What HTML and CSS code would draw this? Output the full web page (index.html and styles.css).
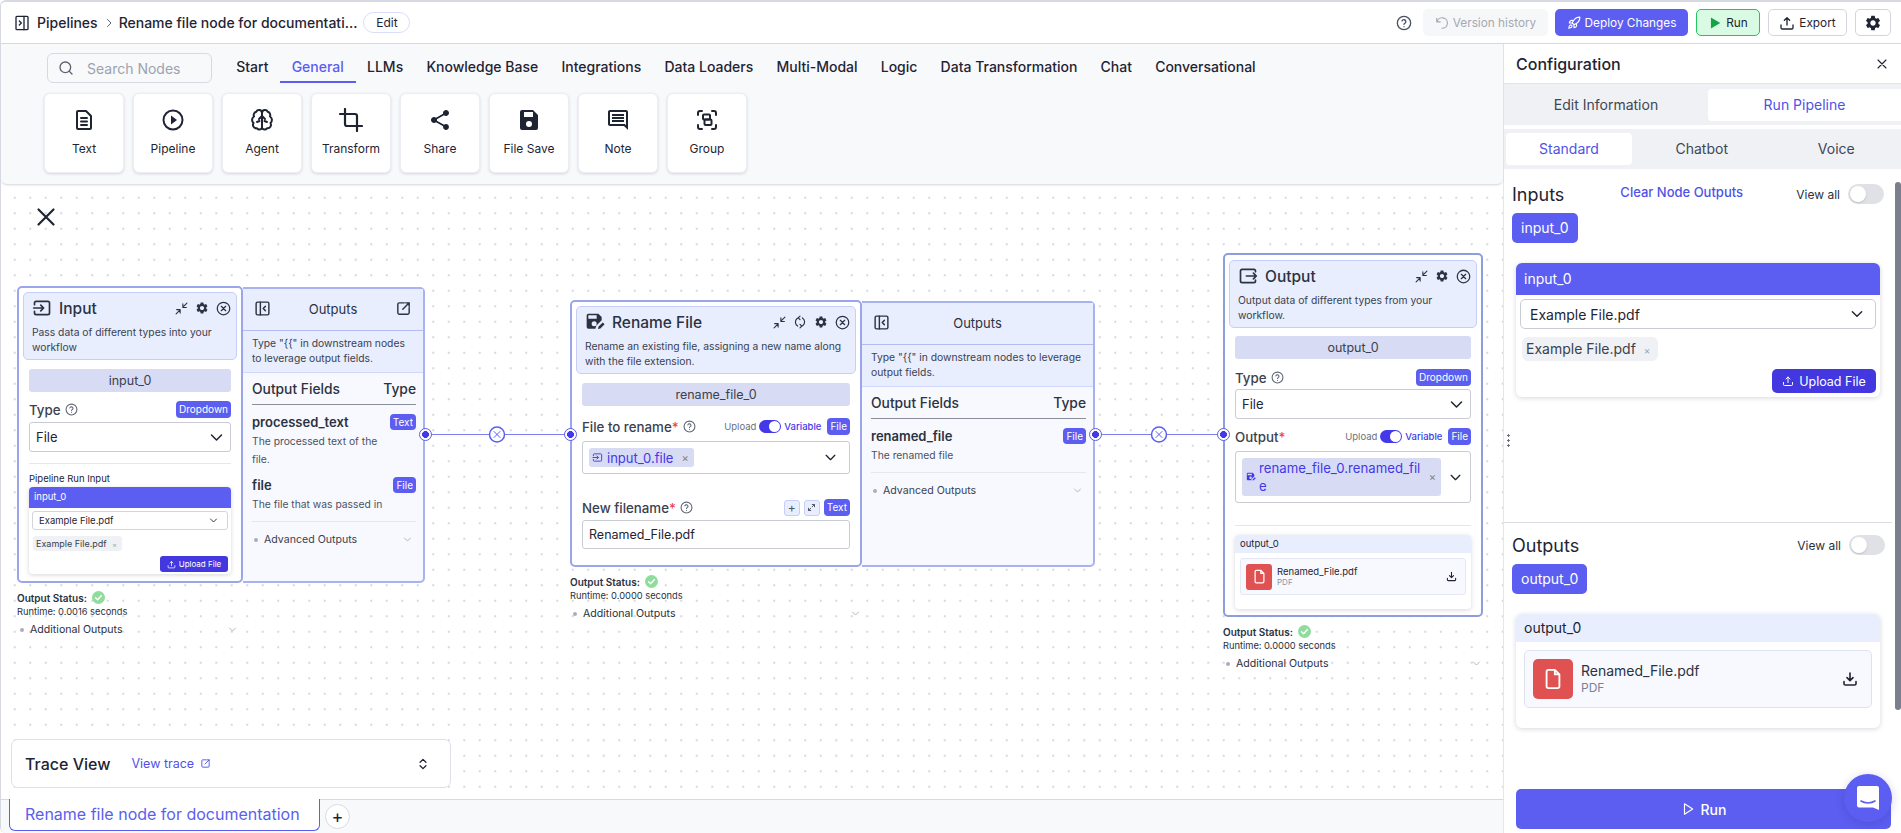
FILE: index.html
```html
<!DOCTYPE html>
<html lang="en">
<head>
<meta charset="utf-8">
<title>Rename file node for documentation</title>
<link rel="stylesheet" href="styles.css">
</head>
<body>
<svg class="sprite" aria-hidden="true">
  <symbol id="i-gear" viewBox="0 0 24 24"><path fill="currentColor" d="M19.14 12.94c.04-.3.06-.61.06-.94 0-.32-.02-.64-.07-.94l2.03-1.58a.49.49 0 00.12-.61l-1.92-3.32a.488.488 0 00-.59-.22l-2.39.96c-.5-.38-1.03-.7-1.62-.94l-.36-2.54a.484.484 0 00-.48-.41h-3.84c-.24 0-.43.17-.47.41l-.36 2.54c-.59.24-1.13.57-1.62.94l-2.39-.96c-.22-.08-.47 0-.59.22L2.74 8.87c-.12.21-.08.47.12.61l2.03 1.58c-.05.3-.09.63-.09.94s.02.64.07.94l-2.03 1.58a.49.49 0 00-.12.61l1.92 3.32c.12.22.37.29.59.22l2.39-.96c.5.38 1.03.7 1.62.94l.36 2.54c.05.24.24.41.48.41h3.84c.24 0 .44-.17.47-.41l.36-2.54c.59-.24 1.13-.56 1.62-.94l2.39.96c.22.08.47 0 .59-.22l1.92-3.32c.12-.22.07-.47-.12-.61l-2.01-1.58zM12 15.6c-1.98 0-3.6-1.62-3.6-3.6s1.62-3.6 3.6-3.6 3.6 1.62 3.6 3.6-1.62 3.6-3.6 3.6z"/></symbol>
  <symbol id="i-xcircle" viewBox="0 0 24 24"><g fill="none" stroke="currentColor" stroke-width="2" stroke-linecap="round"><circle cx="12" cy="12" r="10"/><path d="M8.5 8.5l7 7M15.5 8.5l-7 7"/></g></symbol>
  <symbol id="i-min" viewBox="0 0 24 24"><g fill="none" stroke="currentColor" stroke-width="2" stroke-linecap="round" stroke-linejoin="round"><path d="M2 22l7-7M3 14h6.500v6.500M22 2l-7 7M21 10h-6.500V3.500"/></g></symbol>
  <symbol id="i-help" viewBox="0 0 24 24"><g fill="none" stroke="currentColor" stroke-width="2" stroke-linecap="round"><circle cx="12" cy="12" r="10"/><path d="M9 9a3 3 0 015.8 1c0 2-2.8 2.4-2.8 4"/><path d="M12 17.5v.01"/></g></symbol>
  <symbol id="i-chev" viewBox="0 0 24 24"><path fill="none" stroke="currentColor" stroke-width="2.4" stroke-linecap="round" stroke-linejoin="round" d="M4 8l8 8 8-8"/></symbol>
  <symbol id="i-panel" viewBox="0 0 24 24"><g fill="none" stroke="currentColor" stroke-width="2" stroke-linecap="round" stroke-linejoin="round"><rect x="3" y="3" width="18" height="18" rx="2"/><path d="M9 3v18M16 9l-3 3 3 3"/></g></symbol>
  <symbol id="i-ext" viewBox="0 0 24 24"><g fill="none" stroke="currentColor" stroke-width="2" stroke-linecap="round" stroke-linejoin="round"><path d="M13 4H6a2 2 0 00-2 2v12a2 2 0 002 2h12a2 2 0 002-2v-7"/><path d="M11 13l9-9M15 4h5v5"/></g></symbol>
  <symbol id="i-check" viewBox="0 0 24 24"><circle cx="12" cy="12" r="12" fill="#8fdc9d"/><path fill="none" stroke="#fff" stroke-width="2.6" stroke-linecap="round" stroke-linejoin="round" d="M6.5 12.5l3.8 3.8 7.2-8"/></symbol>
  <symbol id="i-upload" viewBox="0 0 24 24"><g fill="none" stroke="currentColor" stroke-width="2" stroke-linecap="round" stroke-linejoin="round"><path d="M12 15V4M8 8l4-4 4 4M3 15v4a2 2 0 002 2h14a2 2 0 002-2v-4"/></g></symbol>
  <symbol id="i-download" viewBox="0 0 24 24"><g fill="none" stroke="currentColor" stroke-width="2.4" stroke-linecap="round" stroke-linejoin="round"><path d="M12 3v11M7.5 10l4.500 4.500L16.500 10M3 16v3a2 2 0 002 2h14a2 2 0 002-2v-3"/></g></symbol>
  <symbol id="i-file" viewBox="0 0 24 24"><path fill="none" stroke="currentColor" stroke-width="2" stroke-linejoin="round" d="M14 2H7a2 2 0 00-2 2v16a2 2 0 002 2h10a2 2 0 002-2V7zM14 2v5h5"/></symbol>
  <symbol id="i-input" viewBox="0 0 24 24"><g fill="none" stroke="currentColor" stroke-width="2" stroke-linecap="round" stroke-linejoin="round"><path d="M3 8V6a2 2 0 012-2h14a2 2 0 012 2v12a2 2 0 01-2 2H5a2 2 0 01-2-2v-2"/><path d="M2 12h12M10.500 8.500L14 12l-3.500 3.500"/></g></symbol>
  <symbol id="i-output" viewBox="0 0 24 24"><g fill="none" stroke="currentColor" stroke-width="2" stroke-linecap="round" stroke-linejoin="round"><path d="M21 7V6a2 2 0 00-2-2H5a2 2 0 00-2 2v12a2 2 0 002 2h14a2 2 0 002-2v-1"/><path d="M10 12h12M18.500 8.500L22 12l-3.500 3.500"/></g></symbol>
  <symbol id="i-rename" viewBox="0 0 24 24"><path fill="currentColor" d="M16 2H4a2 2 0 00-2 2v14a2 2 0 002 2h8.500l1-3.500 6.500-6.500V6l-4-4zm-5 15a3 3 0 110-6 3 3 0 010 6zm3-9H4V4h10v4zM15.500 20.500l.8-3 5-5 2.200 2.200-5 5z"/></symbol>
  <symbol id="i-sync" viewBox="0 0 24 24"><g fill="none" stroke="currentColor" stroke-width="2" stroke-linecap="round" stroke-linejoin="round"><path d="M8 19a8 8 0 01-1-13l2-1"/><path d="M16 5a8 8 0 011 13l-2 1"/><path d="M12 2L9 5l3 3M12 22l3-3-3-3"/></g></symbol>
</svg>

<div class="app">
  <header class="topbar">
    <svg class="ic-16 ic-dark" viewBox="0 0 24 24"><g fill="none" stroke="currentColor" stroke-width="2" stroke-linecap="round" stroke-linejoin="round"><rect x="3" y="2" width="18" height="20" rx="1.500"/><path d="M15 2v20M8 9l3 3-3 3"/></g></svg>
    <a class="crumb">Pipelines</a>
    <svg class="ic-12 ic-grey crumb-sep" viewBox="0 0 24 24"><path fill="none" stroke="currentColor" stroke-width="2" stroke-linecap="round" stroke-linejoin="round" d="M9 5l7 7-7 7"/></svg>
    <span class="crumb crumb-title">Rename file node for documentati...</span>
    <button class="edit-btn">Edit</button>
    <span class="spacer"></span>
    <svg class="ic-16 ic-slate" viewBox="0 0 24 24"><use href="#i-help"/></svg>
    <button class="top-btn version">
      <svg class="ic-14" viewBox="0 0 24 24"><path fill="none" stroke="currentColor" stroke-width="2" stroke-linecap="round" stroke-linejoin="round" d="M3 4v6h6M3.500 10A9 9 0 1112 21"/></svg>Version history</button>
    <button class="top-btn deploy">
      <svg class="ic-14" viewBox="0 0 24 24"><g fill="none" stroke="currentColor" stroke-width="2" stroke-linecap="round" stroke-linejoin="round"><path d="M5 16c-1.500 1.300-2 5-2 5s3.700-.5 5-2c.7-.8.7-2.100-.1-2.900-.8-.8-2.100-.8-2.900-.1z"/><path d="M12 15l-3-3a22 22 0 012-3.900A13 13 0 0122 2c0 2.700-.8 7.500-6 11a22 22 0 01-4 2z"/><path d="M9 12H4s.5-3 2-4c1.600-1.100 5 0 5 0M12 15v5s3-.5 4-2c1.100-1.600 0-5 0-5"/></g></svg>Deploy Changes</button>
    <button class="top-btn run-top">
      <svg class="ic-14" viewBox="0 0 24 24"><path fill="#15a34a" d="M5 2.500v19L21 12z"/></svg>Run</button>
    <button class="top-btn export">
      <svg class="ic-16" viewBox="0 0 24 24"><use href="#i-upload"/></svg>Export</button>
    <button class="top-btn gear"><svg class="ic-18" viewBox="0 0 24 24"><use href="#i-gear"/></svg></button>
  </header>

  <div class="workspace">
    <main class="editor">
      <section class="palette">
        <div class="palette-tabs">
          <label class="search">
            <svg class="ic-16" viewBox="0 0 24 24"><g fill="none" stroke="currentColor" stroke-width="2" stroke-linecap="round"><circle cx="11" cy="11" r="8"/><path d="M21 21l-4.300-4.300"/></g></svg>
            <span>Search Nodes</span>
          </label>
          <nav class="tabs">
            <a class="tab">Start</a><a class="tab tab-on">General</a><a class="tab">LLMs</a><a class="tab">Knowledge Base</a><a class="tab">Integrations</a><a class="tab">Data Loaders</a><a class="tab">Multi-Modal</a><a class="tab">Logic</a><a class="tab">Data Transformation</a><a class="tab">Chat</a><a class="tab">Conversational</a>
          </nav>
        </div>
        <div class="cards">
          <div class="card">
            <svg class="ic-24" viewBox="0 0 24 24"><g fill="none" stroke="currentColor" stroke-width="2" stroke-linejoin="round" stroke-linecap="round"><path d="M14 3H6a1 1 0 00-1 1v16a1 1 0 001 1h12a1 1 0 001-1V8z"/><path d="M9 10h6M9 13.500h6M9 17h6"/></g></svg>
            <span>Text</span></div>
          <div class="card">
            <svg class="ic-24" viewBox="0 0 24 24"><circle cx="12" cy="12" r="9.500" fill="none" stroke="currentColor" stroke-width="2"/><path fill="currentColor" d="M10 7.500v9l6-4.500z"/></svg>
            <span>Pipeline</span></div>
          <div class="card">
            <svg class="ic-24" viewBox="0 0 24 24"><g fill="none" stroke="currentColor" stroke-width="2" stroke-linecap="round" stroke-linejoin="round"><path d="M12 5a3 3 0 00-5.700-1.300A3.500 3.500 0 004 8.500a4 4 0 00-.5 6.500A3.500 3.500 0 007 20.300 3 3 0 0012 20z"/><path d="M12 5a3 3 0 015.700-1.300A3.500 3.500 0 0120 8.500a4 4 0 01.5 6.500 3.500 3.500 0 01-3.500 5.300A3 3 0 0112 20z"/><path d="M12 20V8M9 11l3-3 3 3M7 14l2.500-1M17 14l-2.500-1"/></g></svg>
            <span>Agent</span></div>
          <div class="card">
            <svg class="ic-24" viewBox="0 0 24 24"><g fill="none" stroke="currentColor" stroke-width="2.200" stroke-linecap="round" stroke-linejoin="round"><path d="M6 1v15a2 2 0 002 2h15"/><path d="M18 23V8a2 2 0 00-2-2H1"/></g></svg>
            <span>Transform</span></div>
          <div class="card">
            <svg class="ic-24" viewBox="0 0 24 24"><path fill="currentColor" d="M18 16.080c-.76 0-1.440.3-1.960.77L8.910 12.700c.05-.23.09-.46.09-.7s-.04-.47-.09-.7l7.050-4.110c.54.5 1.250.81 2.040.81 1.660 0 3-1.340 3-3s-1.340-3-3-3-3 1.340-3 3c0 .24.04.47.09.7L8.040 9.810C7.500 9.310 6.790 9 6 9c-1.660 0-3 1.340-3 3s1.340 3 3 3c.79 0 1.500-.31 2.040-.81l7.120 4.160c-.05.21-.08.43-.08.65 0 1.610 1.310 2.920 2.920 2.920 1.610 0 2.920-1.310 2.920-2.920s-1.310-2.920-2.920-2.920z"/></svg>
            <span>Share</span></div>
          <div class="card">
            <svg class="ic-24" viewBox="0 0 24 24"><path fill="currentColor" fill-rule="evenodd" d="M5 2h11l5 5v13a2 2 0 01-2 2H5a2 2 0 01-2-2V4a2 2 0 012-2zm2 2v5h9V4zm5 9a3 3 0 100 6 3 3 0 000-6z"/></svg>
            <span>File Save</span></div>
          <div class="card">
            <svg class="ic-24" viewBox="0 0 24 24"><path fill="currentColor" d="M21.990 4c0-1.100-.89-2-1.990-2H4c-1.100 0-2 .9-2 2v12c0 1.100.9 2 2 2h14l4 4-.01-18zM20 4v13.170L18.830 16H4V4h16zM6 12h12v2H6zm0-3h12v2H6zm0-3h12v2H6z"/></svg>
            <span>Note</span></div>
          <div class="card">
            <svg class="ic-24" viewBox="0 0 24 24"><g fill="none" stroke="currentColor" stroke-width="2" stroke-linecap="round" stroke-linejoin="round"><path d="M3 7V5a2 2 0 012-2h2M17 3h2a2 2 0 012 2v2M21 17v2a2 2 0 01-2 2h-2M7 21H5a2 2 0 01-2-2v-2"/><rect x="8" y="6.500" width="7" height="5" rx="1"/><rect x="9.500" y="11.500" width="7" height="5.500" rx="1"/></g></svg>
            <span>Group</span></div>
        </div>
      </section>

      <section class="canvas">
        <svg class="close-x" viewBox="0 0 24 24"><path fill="none" stroke="currentColor" stroke-width="2.600" stroke-linecap="round" d="M3 3l18 18M21 3L3 21"/></svg>

        <svg class="edges" width="1503" height="615">
          <path d="M424 250.500H569M1094 250.500H1222"/>
          <g class="edge-x"><circle cx="496" cy="250.500" r="7.500"/><path d="M493 247.500l6 6M499 247.500l-6 6"/></g>
          <g class="edge-x"><circle cx="1158" cy="250.500" r="7.500"/><path d="M1155 247.500l6 6M1161 247.500l-6 6"/></g>
        </svg>

        <!-- Input node -->
        <article class="node node-input">
          <div class="node-row">
            <div class="node-main main-input">
              <div class="node-head">
                <div class="head-line">
                  <svg class="ic-20" viewBox="0 0 24 24"><use href="#i-input"/></svg>
                  <h3>Input</h3><span class="spacer"></span>
                  <svg class="ic-13" viewBox="0 0 24 24"><use href="#i-min"/></svg>
                  <svg class="ic-14" viewBox="0 0 24 24"><use href="#i-gear"/></svg>
                  <svg class="ic-15" viewBox="0 0 24 24"><use href="#i-xcircle"/></svg>
                </div>
                <p>Pass data of different types into your workflow</p>
              </div>
              <div class="node-body">
                <div class="name-bar">input_0</div>
                <div class="field-row">
                  <span class="f-label">Type</span><svg class="ic-13 ic-grey" viewBox="0 0 24 24"><use href="#i-help"/></svg>
                  <span class="spacer"></span><span class="badge">Dropdown</span>
                </div>
                <div class="select">File<svg class="ic-15" viewBox="0 0 24 24"><use href="#i-chev"/></svg></div>
                <hr class="rule rule-input">
                <div class="run-label">Pipeline Run Input</div>
                <div class="mini-card">
                  <div class="mini-head purple">input_0</div>
                  <div class="mini-select">Example File.pdf<svg class="ic-9" viewBox="0 0 24 24"><use href="#i-chev"/></svg></div>
                  <div class="mini-chip">Example File.pdf <i>×</i></div>
                  <div class="mini-foot"><button class="mini-upload"><svg class="ic-9" viewBox="0 0 24 24"><use href="#i-upload"/></svg>Upload File</button></div>
                </div>
              </div>
            </div>
            <aside class="outs outs-input">
              <div class="outs-head">
                <svg class="ic-17" viewBox="0 0 24 24"><use href="#i-panel"/></svg>
                <span>Outputs</span>
                <svg class="ic-17" viewBox="0 0 24 24"><use href="#i-ext"/></svg>
              </div>
              <p class="outs-desc">Type "{{" in downstream nodes to leverage output fields.</p>
              <div class="outs-body">
                <div class="outs-th"><span>Output Fields</span><span>Type</span></div>
                <div class="out-field">
                  <div class="out-name"><b>processed_text</b><span class="badge badge-sm">Text</span></div>
                  <p>The processed text of the file.</p>
                </div>
                <div class="out-field">
                  <div class="out-name"><b>file</b><span class="badge badge-sm">File</span></div>
                  <p>The file that was passed in</p>
                </div>
                <div class="adv">
                  <i class="dot"></i>Advanced Outputs<span class="spacer"></span><svg class="ic-9 ic-pale" viewBox="0 0 24 24"><use href="#i-chev"/></svg>
                </div>
              </div>
            </aside>
            <span class="handle h-right"></span>
          </div>
          <footer class="status">
            <div class="status-line"><b>Output Status:</b><svg class="ic-13" viewBox="0 0 24 24"><use href="#i-check"/></svg></div>
            <div class="runtime">Runtime: 0.0016 seconds</div>
            <div class="addl"><i class="dot"></i>Additional Outputs<span class="spacer"></span><svg class="ic-9 ic-pale" viewBox="0 0 24 24"><use href="#i-chev"/></svg></div>
          </footer>
        </article>

        <!-- Rename node -->
        <article class="node node-rename">
          <div class="node-row">
            <div class="node-main main-rename">
              <div class="node-head">
                <div class="head-line">
                  <svg class="ic-20" viewBox="0 0 24 24"><use href="#i-rename"/></svg>
                  <h3>Rename File</h3><span class="spacer"></span>
                  <svg class="ic-13" viewBox="0 0 24 24"><use href="#i-min"/></svg>
                  <svg class="ic-14" viewBox="0 0 24 24"><use href="#i-sync"/></svg>
                  <svg class="ic-14" viewBox="0 0 24 24"><use href="#i-gear"/></svg>
                  <svg class="ic-15" viewBox="0 0 24 24"><use href="#i-xcircle"/></svg>
                </div>
                <p>Rename an existing file, assigning a new name along with the file extension.</p>
              </div>
              <div class="node-body">
                <div class="name-bar">rename_file_0</div>
                <div class="field-row row-file">
                  <span class="f-label">File to rename<em>*</em></span><svg class="ic-13 ic-grey" viewBox="0 0 24 24"><use href="#i-help"/></svg>
                  <span class="spacer"></span>
                  <span class="mode">Upload</span><span class="mini-toggle"></span><span class="mode mode-on">Variable</span>
                  <span class="badge badge-file">File</span>
                </div>
                <div class="select select-var">
                  <span class="var-chip"><svg class="ic-11" viewBox="0 0 24 24"><use href="#i-input"/></svg>input_0.file<i>×</i></span>
                  <svg class="ic-13" viewBox="0 0 24 24"><use href="#i-chev"/></svg>
                </div>
                <div class="field-row row-new">
                  <span class="f-label">New filename<em>*</em></span><svg class="ic-13 ic-grey" viewBox="0 0 24 24"><use href="#i-help"/></svg>
                  <span class="spacer"></span>
                  <span class="sq-btn">+</span>
                  <span class="sq-btn"><svg class="ic-9" viewBox="0 0 24 24"><path fill="none" stroke="currentColor" stroke-width="2.500" stroke-linecap="round" stroke-linejoin="round" d="M4 20l6-6M4 14v6h6M20 4l-6 6M14 4h6v6"/></svg></span>
                  <span class="badge">Text</span>
                </div>
                <div class="select text-in">Renamed_File.pdf</div>
              </div>
            </div>
            <aside class="outs outs-rename">
              <div class="outs-head">
                <svg class="ic-17" viewBox="0 0 24 24"><use href="#i-panel"/></svg>
                <span>Outputs</span>
                <span class="ic-17"></span>
              </div>
              <p class="outs-desc">Type "{{" in downstream nodes to leverage output fields.</p>
              <div class="outs-body">
                <div class="outs-th"><span>Output Fields</span><span>Type</span></div>
                <div class="out-field">
                  <div class="out-name"><b>renamed_file</b><span class="badge badge-sm">File</span></div>
                  <p>The renamed file</p>
                </div>
                <div class="adv">
                  <i class="dot"></i>Advanced Outputs<span class="spacer"></span><svg class="ic-9 ic-pale" viewBox="0 0 24 24"><use href="#i-chev"/></svg>
                </div>
              </div>
            </aside>
            <span class="handle h-left"></span>
            <span class="handle h-right"></span>
          </div>
          <footer class="status">
            <div class="status-line"><b>Output Status:</b><svg class="ic-13" viewBox="0 0 24 24"><use href="#i-check"/></svg></div>
            <div class="runtime">Runtime: 0.0000 seconds</div>
            <div class="addl"><i class="dot"></i>Additional Outputs<span class="spacer"></span><svg class="ic-9 ic-pale" viewBox="0 0 24 24"><use href="#i-chev"/></svg></div>
          </footer>
        </article>

        <!-- Output node -->
        <article class="node node-output">
          <div class="node-row">
            <div class="node-main main-output">
              <div class="node-head">
                <div class="head-line">
                  <svg class="ic-20" viewBox="0 0 24 24"><use href="#i-output"/></svg>
                  <h3>Output</h3><span class="spacer"></span>
                  <svg class="ic-13" viewBox="0 0 24 24"><use href="#i-min"/></svg>
                  <svg class="ic-14" viewBox="0 0 24 24"><use href="#i-gear"/></svg>
                  <svg class="ic-15" viewBox="0 0 24 24"><use href="#i-xcircle"/></svg>
                </div>
                <p>Output data of different types from your workflow.</p>
              </div>
              <div class="node-body">
                <div class="name-bar">output_0</div>
                <div class="field-row row-type">
                  <span class="f-label">Type</span><svg class="ic-13 ic-grey" viewBox="0 0 24 24"><use href="#i-help"/></svg>
                  <span class="spacer"></span><span class="badge">Dropdown</span>
                </div>
                <div class="select select-type">File<svg class="ic-15" viewBox="0 0 24 24"><use href="#i-chev"/></svg></div>
                <div class="field-row row-out">
                  <span class="f-label">Output<em>*</em></span>
                  <span class="spacer"></span>
                  <span class="mode">Upload</span><span class="mini-toggle"></span><span class="mode mode-on">Variable</span>
                  <span class="badge badge-file">File</span>
                </div>
                <div class="select select-tall">
                  <span class="var-chip var-wide"><svg class="ic-10" viewBox="0 0 24 24"><use href="#i-rename"/></svg><span class="var-text">rename_file_0.renamed_fil e</span><i>×</i></span>
                  <svg class="ic-13" viewBox="0 0 24 24"><use href="#i-chev"/></svg>
                </div>
                <hr class="rule rule-output">
                <div class="mini-card mini-result">
                  <div class="mini-head pale">output_0</div>
                  <div class="file-row">
                    <span class="file-tile"><svg class="ic-15" viewBox="0 0 24 24"><use href="#i-file"/></svg></span>
                    <div class="file-meta"><span>Renamed_File.pdf</span><small>PDF</small></div>
                    <span class="spacer"></span>
                    <svg class="ic-11" viewBox="0 0 24 24"><use href="#i-download"/></svg>
                  </div>
                </div>
              </div>
            </div>
            <span class="handle h-left"></span>
          </div>
          <footer class="status">
            <div class="status-line"><b>Output Status:</b><svg class="ic-13" viewBox="0 0 24 24"><use href="#i-check"/></svg></div>
            <div class="runtime">Runtime: 0.0000 seconds</div>
            <div class="addl"><i class="dot"></i>Additional Outputs<span class="spacer"></span><svg class="ic-9 ic-pale" viewBox="0 0 24 24"><use href="#i-chev"/></svg></div>
          </footer>
        </article>

        <div class="trace">
          <strong>Trace View</strong>
          <a>View trace<svg class="ic-11" viewBox="0 0 24 24"><use href="#i-ext"/></svg></a>
          <span class="spacer"></span>
          <svg class="ic-14" viewBox="0 0 24 24"><path fill="none" stroke="currentColor" stroke-width="2.200" stroke-linecap="round" stroke-linejoin="round" d="M7 9l5-5 5 5M7 15l5 5 5-5"/></svg>
        </div>
      </section>

      <footer class="tabbar">
        <div class="doc-tab">Rename file node for documentation</div>
        <button class="add-tab">+</button>
      </footer>
    </main>

    <aside class="config">
      <div class="config-head"><h2>Configuration</h2>
        <svg class="ic-12" viewBox="0 0 24 24"><path fill="none" stroke="currentColor" stroke-width="2.200" stroke-linecap="round" d="M4 4l16 16M20 4L4 20"/></svg>
      </div>
      <div class="seg seg-2"><span>Edit Information</span><span class="seg-on">Run Pipeline</span></div>
      <div class="seg seg-3"><span class="seg-on">Standard</span><span>Chatbot</span><span>Voice</span></div>

      <div class="config-scroll">
        <section class="io io-in">
          <div class="io-head"><h2>Inputs</h2><a class="clear">Clear Node Outputs</a><span class="spacer"></span><span class="viewall">View all</span><span class="toggle"></span></div>
          <span class="chip">input_0</span>
          <div class="io-card">
            <div class="io-card-head purple">input_0</div>
            <div class="io-select">Example File.pdf<svg class="ic-14" viewBox="0 0 24 24"><use href="#i-chev"/></svg></div>
            <div class="io-chip">Example File.pdf <i>×</i></div>
            <div class="io-foot"><button class="io-upload"><svg class="ic-12" viewBox="0 0 24 24"><use href="#i-upload"/></svg>Upload File</button></div>
          </div>
        </section>
        <section class="io io-out">
          <div class="io-head"><h2>Outputs</h2><span class="spacer"></span><span class="viewall">View all</span><span class="toggle"></span></div>
          <span class="chip">output_0</span>
          <div class="io-card io-card-out">
            <div class="io-card-head pale">output_0</div>
            <div class="io-file">
              <span class="io-tile"><svg class="ic-22" viewBox="0 0 24 24"><use href="#i-file"/></svg></span>
              <div class="io-meta"><span>Renamed_File.pdf</span><small>PDF</small></div>
              <span class="spacer"></span>
              <svg class="ic-16" viewBox="0 0 24 24"><use href="#i-download"/></svg>
            </div>
          </div>
        </section>
        <button class="run-main">
          <svg class="ic-14" viewBox="0 0 24 24"><path fill="none" stroke="currentColor" stroke-width="2" stroke-linejoin="round" d="M6 3v18l14-9z"/></svg>Run</button>
      </div>
      <span class="scroll-thumb"></span>
      <span class="grip"></span>
    </aside>
  </div>
</div>

<div class="chat-bubble">
  <svg width="24" height="26" viewBox="0 0 24 26"><path fill="#fff" d="M3 1h18a2 2 0 012 2v22l-6-2.500H3a2 2 0 01-2-2V3a2 2 0 012-2z"/><path fill="none" stroke="#5b5ef0" stroke-width="1.600" stroke-linecap="round" d="M5 16c4 2.600 10 2.600 14 0"/></svg>
</div>
</body>
</html>
```

FILE: styles.css
```css
* { box-sizing: border-box; }
html, body { margin: 0; height: 100%; overflow: hidden; }
body { font-family: Inter, "Liberation Sans", sans-serif; color: #1f2433; background: #fff; font-size: 14px; }
h2, h3, p { margin: 0; font-weight: 400; }
button { font: inherit; color: inherit; background: none; border: 0; padding: 0; }
i { font-style: normal; }
svg { display: block; flex: none; }
.sprite { position: absolute; width: 0; height: 0; }
.spacer { flex: 1; }

.ic-9 { width: 9px; height: 9px; } .ic-10 { width: 10px; height: 10px; }
.ic-11 { width: 11px; height: 11px; } .ic-12 { width: 12px; height: 12px; }
.ic-13 { width: 13px; height: 13px; } .ic-14 { width: 14px; height: 14px; }
.ic-15 { width: 15px; height: 15px; } .ic-16 { width: 16px; height: 16px; }
.ic-17 { width: 17px; height: 17px; } .ic-18 { width: 18px; height: 18px; }
.ic-20 { width: 20px; height: 20px; } .ic-22 { width: 22px; height: 22px; }
.ic-24 { width: 24px; height: 24px; }
.ic-dark { color: #1f2433; } .ic-grey { color: #5f6675; } .ic-slate { color: #4b5263; } .ic-pale { color: #a9aebb; }

.app { height: 833px; display: flex; flex-direction: column; border-top: 2px solid #d6d8e2; border-left: 1px solid #d6d8e2; border-radius: 6px 0 0 6px; overflow: hidden; }

/* top bar */
.topbar { height: 42px; flex: none; display: flex; align-items: center; padding: 0 10px 0 13px; border-bottom: 1px solid #d6d8e2; background: #fff; }
.crumb { font-size: 14px; line-height: 20px; margin-left: 7px; white-space: nowrap; font-weight: 450; }
.crumb-sep { margin-left: 5px; }
.crumb-title { margin-left: 4px; }
.edit-btn { margin-left: 6px; width: 47px; height: 21px; border: 1px solid #d9dcfb; border-radius: 11px; font-size: 12px; }
.top-btn { height: 27px; display: flex; align-items: center; justify-content: center; gap: 4px; border-radius: 5px; font-size: 11.800px; margin-left: 8px; white-space: nowrap; }
.version { width: 125px; margin-left: 11px; background: #f6f7f8; color: #a4a9b3; }
.deploy { width: 133px; margin-left: 7px; background: #5b5ef0; color: #fff; }
.run-top { width: 64px; background: #d9fbe3; border: 1px solid #22c55e; color: #1f2433; }
.export { width: 79px; border: 1px solid #d3d5dc; }
.gear { width: 36px; border: 1px solid #d3d5dc; }

.workspace { flex: 1; display: flex; min-height: 0; }
.editor { width: 1502px; flex: none; display: flex; flex-direction: column; position: relative; }

/* palette */
.palette { height: 141px; flex: none; background: #f8f9fb; border-bottom: 1px solid #dfe1e7; border-radius: 0 0 6px 6px; box-shadow: 0 1px 2px rgba(30, 35, 60, .08); padding: 9px 0 0 43px; position: relative; z-index: 1; }
.palette-tabs { display: flex; height: 30px; }
.search { width: 165px; height: 30px; margin-left: 3px; display: flex; align-items: center; gap: 13px; padding-left: 10px; border: 1px solid #d7dae3; border-radius: 6px; color: #5b6270; }
.search span { color: #9ca3af; font-size: 14px; }
.tabs { display: flex; margin-left: 13px; }
.tab { height: 30px; padding: 0 12px; font-size: 14px; line-height: 27px; white-space: nowrap; font-weight: 450; margin-left: -0.800px; }
.tab-on { color: #5b5ef0; border-bottom: 2px solid #5b5ef0; }
.cards { display: flex; gap: 9px; margin-top: 10px; }
.card { width: 80px; height: 80px; background: #fff; border: 1px solid #eceef3; border-radius: 6px; box-shadow: 0 1px 3px rgba(30, 35, 60, .16); display: flex; flex-direction: column; align-items: center; padding-top: 14px; }
.card span { font-size: 12px; line-height: 16px; margin-top: 9px; }

/* canvas */
.canvas { flex: 1; margin-top: -1px; position: relative; min-height: 0; background-color: #fff; background-image: radial-gradient(circle, #d3d6e4 0.7px, transparent 1px); background-size: 15.500px 15.500px; background-position: 6px 6px; }
.close-x { position: absolute; left: 35px; top: 23px; width: 20px; height: 20px; color: #1f2433; }
.edges { position: absolute; left: 0; top: 0; pointer-events: none; }
.edges > path { fill: none; stroke: #7b80f0; stroke-width: 1; }
.edge-x circle { fill: #fff; stroke: #5b5ef0; stroke-width: 1.500; }
.edge-x path { stroke: #5b5ef0; stroke-linecap: round; }

.node { position: absolute; }
.node-input { left: 16px; top: 102px; width: 408px; }
.node-rename { left: 569px; top: 116px; width: 525px; }
.node-output { left: 1222px; top: 69px; width: 260px; }
.node-row { display: flex; align-items: stretch; position: relative; }
.node-main { background: #fff; border: 2px solid #9aa5ec; border-radius: 5px; padding: 4px; flex: none; position: relative; z-index: 1; }
.main-input { width: 226px; height: 297px; }
.main-rename { width: 292px; height: 267px; }
.main-output { width: 260px; height: 364px; padding-top: 5px; border-color: #8d9ede; }
.node-head { height: 68px; background: #e8eefd; border: 1px solid #c5cffa; border-radius: 5px; padding: 4px 5px 0 8px; }
.head-line { display: flex; align-items: center; gap: 7px; height: 22px; color: #2b3242; }
.head-line h3 { font-size: 15.500px; font-weight: 450; margin-left: 0; }
.node-head p { font-size: 10.300px; line-height: 15px; color: #3a4150; margin-top: 6px; }
.node-body { padding: 9px 6px 0; }
.main-output .node-body { padding-top: 8px; }
.name-bar { height: 23px; background: #d8dbf4; border-radius: 3px; text-align: center; font-size: 12.500px; line-height: 23px; color: #3a4150; }
.field-row { display: flex; align-items: center; gap: 4px; height: 17px; margin-top: 9px; color: #3a4150; }
.row-file { margin-top: 12px; }
.row-type { margin-top: 10px; }
.f-label { font-size: 13.300px; font-weight: 500; }
.f-label em { color: #ef4444; font-style: normal; }
.badge { display: inline-block; height: 17px; padding: 0 3px; border-radius: 4px; background: #5b5ef0; color: #fff; font-size: 10px; line-height: 17px; white-space: nowrap; }
.badge-sm { height: 16px; line-height: 16px; padding: 0 3px; }
.badge-file { margin-left: 2px; height: 17px; }
.select { height: 30px; margin-top: 4px; display: flex; align-items: center; justify-content: space-between; padding: 0 6px; background: #fff; border: 1px solid #c9ccd3; border-radius: 3px; font-size: 13px; color: #1f2433; }
.select-type { margin-top: 3px; }
.text-in { height: 29px; margin-top: 4px; font-size: 12.500px; }
.select-var { height: 33px; margin-top: 6px; padding: 0 12px 0 6px; }
.row-new { margin-top: 25px; }
.row-out { margin-top: 9px; }
.select-tall { height: 52px; margin-top: 6px; padding: 0 8px 0 6px; }
.var-chip { display: flex; align-items: center; gap: 4px; height: 19px; padding: 0 5px 0 3px; background: #d8dbf4; border-radius: 3px; color: #4338ea; font-size: 13px; }
.var-chip i { color: #7b8192; font-size: 11px; margin-left: 4px; }
.var-wide { width: 199px; height: 38px; gap: 3px; padding: 0 5px 0 4px; }
.var-text { width: 165px; font-size: 13.200px; line-height: 18px; }
.mode { font-size: 9.500px; color: #6a7080; }
.mode-on { color: #4338ea; font-weight: 500; }
.mini-toggle { width: 22px; height: 13px; border-radius: 7px; background: #4338ea; position: relative; margin: 0 -1px; }
.mini-toggle::after { content: ""; position: absolute; right: 1px; top: 1px; width: 11px; height: 11px; border-radius: 50%; background: #fff; }
.sq-btn { width: 16px; height: 16px; display: flex; align-items: center; justify-content: center; background: #e8eefd; border: 1px solid #c5cffa; border-radius: 3px; color: #4b5263; font-size: 12px; line-height: 1; }
.rule { border: 0; border-top: 1px solid #e5e7eb; }
.rule-input { margin: 11px 0 9px; }
.rule-output { margin: 22px 0 9px; }
.run-label { font-size: 9.500px; line-height: 12px; margin-bottom: 2px; }
.mini-card { height: 87px; background: #fff; border-radius: 4px; box-shadow: 0 1px 4px rgba(30, 35, 60, .18); }
.mini-head { height: 21px; border-radius: 4px 4px 0 0; padding-left: 5px; font-size: 9.500px; line-height: 20px; }
.purple { background: #5b5ef0; color: #fff; }
.pale { background: #e8eefd; color: #1f2433; }
.mini-select { height: 19px; margin: 3px 3px 0; padding: 0 9px 0 6px; display: flex; align-items: center; justify-content: space-between; border: 1px solid #d3d5dc; border-radius: 3px; font-size: 9.500px; }
.mini-chip { display: inline-block; height: 15px; margin: 6px 0 0 4px; padding: 0 5px 0 3px; background: #f0f1f4; border-radius: 3px; font-size: 9px; line-height: 15px; color: #3a4150; }
.mini-chip i { color: #9ca3af; font-size: 7px; margin-left: 3px; }
.mini-foot { display: flex; justify-content: flex-end; padding: 5px 3px 0; }
.mini-upload { height: 16px; width: 68px; display: flex; align-items: center; justify-content: center; gap: 3px; background: #4338e0; color: #fff; border-radius: 3px; font-size: 8px; }
.mini-result { height: 74px; }
.mini-result .mini-head { height: 18px; line-height: 18px; }
.file-row { height: 37px; margin: 5px 5px 0; display: flex; align-items: center; padding: 0 8px 0 5px; background: #f8f9fe; border: 1px solid #e5e8f2; border-radius: 3px; }
.file-tile { width: 26px; height: 26px; display: flex; align-items: center; justify-content: center; background: #e05252; border-radius: 3px; color: #fff; }
.file-meta { display: flex; flex-direction: column; margin-left: 5px; font-size: 9.500px; line-height: 11px; }
.file-meta small { font-size: 8px; color: #8b93a7; }

.outs { flex: none; background: #f8f9fe; border: 2px solid #a8b2f0; border-left: 0; border-radius: 0 5px 5px 0; display: flex; flex-direction: column; margin-top: 1px; }
.outs-input { width: 182px; }
.outs-rename { width: 233px; }
.outs-head { height: 42px; flex: none; display: flex; align-items: center; justify-content: space-between; padding: 0 11px 2px; background: #e8eefd; border-bottom: 1px solid #b4bdf3; color: #2b3242; font-size: 13px; }
.outs-desc { height: 42px; flex: none; padding: 5px 8px 0 9px; background: #e8eefd; border-bottom: 1px solid #cfd8fa; font-size: 10.300px; line-height: 15px; color: #3a4150; }
.outs-body { padding: 0 7px 0 9px; }
.outs-th { display: flex; justify-content: space-between; height: 32px; padding-top: 8px; border-bottom: 1px solid #8a8e9a; font-size: 13.800px; font-weight: 500; color: #2b3242; }
.out-field { margin-top: 8px; }
.out-name { display: flex; justify-content: space-between; align-items: center; height: 17px; color: #2b3242; }
.out-name b { font-size: 13px; font-weight: 600; }
.out-field p { font-size: 10.300px; line-height: 18px; color: #4b5263; margin-top: 2px; max-width: 140px; }
.adv { display: flex; align-items: center; margin-top: 8px; padding: 11px 4px 0 2px; border-top: 1px solid #e5e7eb; font-size: 10.600px; color: #3a4150; }
.dot { width: 4px; height: 4px; border-radius: 50%; background: #a9aebb; margin-right: 6px; }
.handle { position: absolute; width: 13px; height: 13px; border-radius: 50%; background: radial-gradient(circle, #4338ea 0 3.200px, #fff 3.700px); border: 1.500px solid #5b5ef0; z-index: 2; top: 142px; }
.h-left { left: -6.500px; }
.h-right { right: -6.500px; }
.node-rename .handle { top: 128px; }
.node-output .handle { top: 175px; }

.status { margin-top: 7px; font-size: 10px; color: #2b3242; }
.status-line { display: flex; align-items: center; gap: 5px; height: 15px; }
.status-line b { font-weight: 600; }
.runtime { height: 14px; line-height: 14px; font-size: 9.300px; }
.addl { display: flex; align-items: center; height: 17px; margin-top: 2px; font-size: 10.600px; padding-left: 3px; }
.addl .dot { margin-right: 6px; }
.node-input .addl { width: 226px; padding-right: 6px; }
.node-rename .addl { width: 292px; padding-right: 2px; }
.node-output .addl { width: 260px; padding-right: 2px; }

.trace { position: absolute; left: 10px; top: 555px; width: 440px; height: 49px; display: flex; align-items: center; padding: 0 20px 0 13px; background: #fff; border: 1px solid #dfe1ea; border-radius: 7px; }
.trace strong { font-size: 16px; font-weight: 500; }
.trace a { display: flex; align-items: center; gap: 6px; margin-left: 21px; font-size: 12.500px; color: #4f52e8; }

.tabbar { height: 34px; flex: none; display: flex; align-items: flex-start; padding-left: 8px; background: #f8f9fb; border-top: 1px solid #d6d8e2; }
.doc-tab { width: 311px; height: 32px; margin-top: -1px; padding-left: 15px; background: #fff; border: 1px solid #5b5ef0; border-top: 0; border-radius: 0 0 6px 6px; font-size: 16px; line-height: 31px; color: #5b5ef0; }
.add-tab { width: 25px; height: 25px; margin: 4px 0 0 5px; border: 1px solid #d9dbe3; border-radius: 50%; font-size: 18px; line-height: 21px; background: #fff; }

/* configuration */
.config { flex: 1; min-width: 0; display: flex; flex-direction: column; position: relative; border-left: 1px solid #e4e6eb; background: #fff; }
.config-head { height: 40px; flex: none; display: flex; align-items: center; justify-content: space-between; padding: 0 13px 0 12px; border-bottom: 1px solid #e2e4e9; }
.config-head h2 { font-size: 16px; font-weight: 450; }
.seg { display: grid; flex: none; background: #f0f1f4; color: #3f4654; font-size: 14px; text-align: center; }
.seg span { display: block; line-height: 32px; height: 32px; border-radius: 4px 0 0 4px; }
.seg-2 { height: 41px; grid-template-columns: 204px 193px; padding-top: 5px; }
.seg-3 { height: 40px; margin-top: 4px; grid-template-columns: 126px 1fr 1fr; gap: 5px; padding: 4px 0 0 2px; }
.seg-3 span { border-radius: 4px; }
.seg .seg-on { background: #fff; color: #4f52e8; }
.config-scroll { flex: 1; min-height: 0; display: flex; flex-direction: column; }
.io { padding: 0 8px; }
.io-in { height: 354px; border-bottom: 1px solid #dcdee4; margin-right: 9px; padding-right: 0; }
.io-out { height: 266px; }
.io-head { display: flex; align-items: center; height: 20px; margin-top: 15px; }
.io-out .io-head { margin-top: 12px; }
.io-head h2 { font-size: 18px; }
.clear { margin: -4px 0 0 56px; font-size: 13px; font-weight: 500; color: #4f52e8; }
.viewall { font-size: 12px; margin-right: 8px; color: #2b3242; }
.toggle { width: 36px; height: 20px; border-radius: 10px; background: #e0e1e6; position: relative; margin-right: 8px; }
.toggle::after { content: ""; position: absolute; left: 2px; top: 2px; width: 16px; height: 16px; border-radius: 50%; background: #fff; box-shadow: 0 1px 2px rgba(0,0,0,.15); }
.chip { display: inline-block; height: 30px; margin-top: 9px; padding: 0 9px; background: #5b5ef0; color: #fff; border-radius: 5px; font-size: 14px; line-height: 29px; }
.io-out .chip { margin-top: 9px; }
.io-card { width: 364px; margin: 20px 0 0 4px; background: #fff; border-radius: 6px; box-shadow: 0 1px 5px rgba(30, 35, 60, .18); height: 134px; }
.io-card-out { height: 114px; }
.io-card-head { height: 32px; padding-left: 8px; border-radius: 6px 6px 0 0; font-size: 14px; line-height: 31px; }
.io-card-out .io-card-head { height: 28px; line-height: 28px; }
.io-select { height: 30px; margin: 4px 4px 0; padding: 0 11px 0 9px; display: flex; align-items: center; justify-content: space-between; border: 1px solid #c9ccd3; border-radius: 5px; font-size: 14px; }
.io-chip { display: inline-block; height: 24px; margin: 8px 0 0 6px; padding: 0 8px 0 4px; background: #f0f1f4; border-radius: 6px; font-size: 14px; line-height: 24px; color: #3a4150; }
.io-chip i { color: #9ca3af; font-size: 10px; margin-left: 4px; }
.io-foot { display: flex; justify-content: flex-end; padding: 8px 4px 0; }
.io-upload { width: 104px; height: 24px; display: flex; align-items: center; justify-content: center; gap: 5px; background: #4338e0; color: #fff; border-radius: 5px; font-size: 12.500px; }
.io-file { height: 58px; margin: 8px 8px 0; padding: 0 13px 0 8px; display: flex; align-items: center; background: #f8f9fe; border: 1px solid #dfe3ee; border-radius: 5px; }
.io-tile { width: 40px; height: 40px; display: flex; align-items: center; justify-content: center; background: #e05252; color: #fff; border-radius: 5px; }
.io-meta { display: flex; flex-direction: column; margin-left: 8px; font-size: 14px; line-height: 17px; color: #2b3242; }
.io-meta small { font-size: 12px; color: #7a8296; }
.run-main { width: 375px; height: 40px; margin: auto 0 4px 12px; display: flex; align-items: center; justify-content: center; gap: 6px; background: #5b5ef0; color: #fff; border-radius: 5px; font-size: 14px; font-weight: 500; }
.scroll-thumb { position: absolute; right: 0; top: 138px; width: 6px; height: 528px; background: #7a7f8e; border-radius: 3px; }
.grip { position: absolute; left: 3px; top: 389px; width: 3px; height: 14px; background-image: radial-gradient(circle, #6b7080 1px, transparent 1.200px); background-size: 3px 5px; }

.chat-bubble { position: fixed; right: 9px; bottom: 11px; width: 48px; height: 48px; border-radius: 50%; background: #5b5ef0; display: flex; align-items: center; justify-content: center; box-shadow: 0 2px 10px rgba(40, 40, 120, .2); }
```
